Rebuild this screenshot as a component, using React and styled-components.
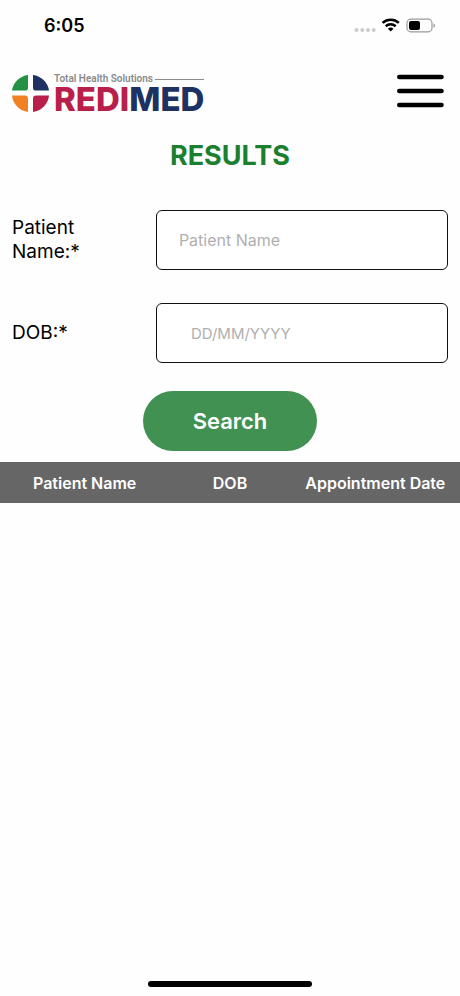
import React from "react";
import styled, { createGlobalStyle } from "styled-components";

const GlobalStyle = createGlobalStyle`
  *, *::before, *::after { box-sizing: border-box; }
  body { margin: 0; background: #fefefe; color: #000; }
  body, button, input { font-family: Inter, "Liberation Sans", sans-serif; }
`;

const Screen = styled.div`
  display: flex;
  flex-direction: column;
  min-height: 100vh;
`;

const StatusBar = styled.div`
  display: flex;
  align-items: center;
  justify-content: space-between;
  height: 52px;
  padding: 0 24px 0 44px;
`;

const Clock = styled.span`
  font-size: 18px;
  font-weight: 600;
  line-height: 24px;
`;

const Header = styled.header`
  display: flex;
  align-items: flex-start;
  justify-content: space-between;
  height: 80px;
  padding: 21px 16px 0 12px;
`;

const Brand = styled.a`
  display: flex;
  align-items: flex-end;
  gap: 5px;
  text-decoration: none;
`;

const BrandText = styled.span`
  display: flex;
  flex-direction: column;
  gap: 1px;
`;

const Tagline = styled.span`
  display: flex;
  align-items: center;
  gap: 2px;
  color: #8a8a8a;
  font: 600 10px/12px Roboto, sans-serif;
  white-space: nowrap;

  &::after {
    content: "";
    flex: 1;
    height: 1px;
    background: #8a8a8a;
  }
`;

const Wordmark = styled.span`
  display: flex;
  height: 26px;
  font-size: 33px;
  font-weight: 800;
  line-height: 26px;
`;

const WordPart = styled.span`
  display: block;
  color: ${(p) => p.$color};
`;

const MenuButton = styled.button`
  display: flex;
  padding: 0;
  border: 0;
  background: none;
  cursor: pointer;
`;

const Title = styled.h1`
  margin: 7px 0 0;
  color: #1a802f;
  font-size: 27px;
  font-weight: 700;
  line-height: 34px;
  text-align: center;
`;

const Form = styled.form`
  display: flex;
  flex-direction: column;
  padding: 37px 12px 11px;
`;

const Field = styled.div`
  display: grid;
  grid-template-columns: 33% 1fr;
  align-items: center;
  margin-bottom: ${(p) => p.$after}px;
`;

const Label = styled.label`
  max-width: 100px;
  font-size: 19px;
  line-height: 24px;
`;

const Input = styled.input`
  width: 100%;
  height: 60px;
  padding: 0 ${(p) => p.$inset}px;
  border: 1px solid #111;
  border-radius: 6px;
  background: #fff;
  font-size: ${(p) => p.$size}px;

  &::placeholder { color: #b0b0b0; opacity: 1; }
`;

const SearchButton = styled.button`
  align-self: center;
  width: 40%;
  height: 60px;
  border: 0;
  border-radius: 30px;
  background: #419152;
  color: #fff;
  font-size: 22px;
  font-weight: 600;
  cursor: pointer;
`;

const TableBand = styled.div`
  padding: 0 12px;
  background: #666;
`;

const Table = styled.table`
  width: 100%;
  table-layout: fixed;
  border-collapse: collapse;
`;

const HeadCell = styled.th`
  height: 41px;
  padding: 0;
  color: #fff;
  font-size: 16px;
  font-weight: 600;
  text-align: center;
  white-space: nowrap;
`;

const HomeIndicator = styled.div`
  width: 164px;
  height: 6px;
  margin: auto auto 9px;
  border-radius: 3px;
  background: #000;
`;

function StatusIcons() {
  return (
    <svg width="82" height="18" viewBox="0 0 82 18" aria-hidden="true">
      <g fill="#cbcbcb">
        <circle cx="2.5" cy="13" r="2" />
        <circle cx="8.3" cy="13" r="2" />
        <circle cx="14" cy="13" r="2" />
        <circle cx="19.7" cy="13" r="2" />
      </g>
      <g fill="none" stroke="#000" strokeWidth="2.5">
        <path d="M28.6 5.8a12 12 0 0 1 16.2 0" />
        <path d="M31.7 9.2a7.6 7.6 0 0 1 10 0" />
      </g>
      <path d="M33.9 11.7a4.4 4.4 0 0 1 5.6 0l-2.8 2.9z" />
      <rect x="53" y="2.2" width="25" height="12.6" rx="3.8" fill="#fff" stroke="#999" strokeWidth="1.2" />
      <rect x="55" y="4" width="11" height="9" rx="2" />
      <path d="M79.5 6.4c2 .5 2 3.7 0 4.2z" fill="#999" />
    </svg>
  );
}

function BrandMark() {
  return (
    <svg width="37" height="37" viewBox="0 0 37 38" preserveAspectRatio="none" aria-hidden="true">
      <path d="M16 0v13q0 3-3 3H0A18.5 19 0 0 1 16 0z" fill="#239044" />
      <path d="M21 0v13q0 3 3 3h13A18.5 19 0 0 0 21 0z" fill="#1d3263" />
      <path d="M16 38V24q0-3-3-3H0a18.5 19 0 0 0 16 17z" fill="#f08224" />
      <path d="M21 38V24q0-3 3-3h13a18.5 19 0 0 1-16 17z" fill="#b91f4b" />
    </svg>
  );
}

function MenuIcon() {
  return (
    <svg width="47" height="36" viewBox="0 0 47 36" aria-hidden="true">
      <path d="M2.3 4h42.2M2.3 18h42.2M2.3 32h42.2" stroke="#000" strokeWidth="4.6" strokeLinecap="round" />
    </svg>
  );
}

const columns = ["Patient Name", "DOB", "Appointment Date"];

export default function App() {
  return (
    <>
      <GlobalStyle />
      <Screen>
        <StatusBar>
          <Clock>6:05</Clock>
          <StatusIcons />
        </StatusBar>
        <Header>
          <Brand href="#">
            <BrandMark />
            <BrandText>
              <Tagline>Total Health Solutions</Tagline>
              <Wordmark>
                <WordPart $color="#b91f4b">REDI</WordPart>
                <WordPart $color="#1d3263">MED</WordPart>
              </Wordmark>
            </BrandText>
          </Brand>
          <MenuButton type="button" aria-label="Menu">
            <MenuIcon />
          </MenuButton>
        </Header>
        <main>
          <Title>RESULTS</Title>
          <Form onSubmit={(e) => e.preventDefault()}>
            <Field $after={33}>
              <Label htmlFor="patient">Patient Name:*</Label>
              <Input id="patient" type="text" placeholder="Patient Name" $inset={22} $size={16} />
            </Field>
            <Field $after={28}>
              <Label htmlFor="dob">DOB:*</Label>
              <Input id="dob" type="text" placeholder="DD/MM/YYYY" $inset={34} $size={15} />
            </Field>
            <SearchButton type="submit">Search</SearchButton>
          </Form>
          <TableBand>
            <Table>
              <thead>
                <tr>
                  {columns.map((name) => (
                    <HeadCell key={name} scope="col">{name}</HeadCell>
                  ))}
                </tr>
              </thead>
            </Table>
          </TableBand>
        </main>
        <HomeIndicator />
      </Screen>
    </>
  );
}
